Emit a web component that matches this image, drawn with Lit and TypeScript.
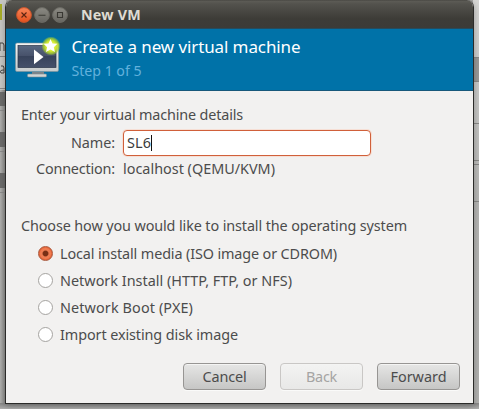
import { LitElement, html, css, svg } from "lit";
import { customElement, property, query } from "lit/decorators.js";

/** A single line of text, tracked so that it fills the given width. */
@customElement("tracked-text")
class TrackedText extends LitElement {
  @property() text = "";
  @property({ type: Number }) width = 0;
  @query("span") span!: HTMLSpanElement;
  static styles = css`
    :host { display: block; white-space: pre; flex: none; }
    span { display: inline-block; }
  `;
  updated() {
    this.span.style.letterSpacing = "0px";
    const natural = this.span.getBoundingClientRect().width;
    this.span.style.letterSpacing = (this.width - natural) / this.text.length + "px";
    this.style.width = this.width + "px";
  }
  render() {
    return html`<span>${this.text}</span>`;
  }
}

const line = (text: string, width: number, cls = "") =>
  html`<tracked-text class=${cls} .text=${text} .width=${width}></tracked-text>`;

@customElement("window-controls")
class WindowControls extends LitElement {
  static styles = css`:host { display: block; height: 18px; } svg { display: block; }`;
  render() {
    const disc = (x: number, fill: string, rim: string, glyph: unknown) => svg`
      <circle cx=${x} cy="9" r="7.4" fill=${fill} stroke=${rim} stroke-width="1"/>${glyph}`;
    return html`<svg width="56" height="18" viewBox="0 0 56 18" fill="none" stroke="#393833" stroke-width="1.1">
      <defs>
        <linearGradient id="o" x2="0" y2="1"><stop stop-color="#f8865a"/><stop offset="1" stop-color="#e4501c"/></linearGradient>
        <linearGradient id="g" x2="0" y2="1"><stop stop-color="#8b8a83"/><stop offset="1" stop-color="#676660"/></linearGradient>
      </defs>
      ${disc(9, "url(#o)", "#c5532b", svg`<path d="M6.5 6.5l5 5M11.5 6.5l-5 5" stroke="#5b2412"/>`)}
      ${disc(27, "url(#g)", "#6b6a64", svg`<path d="M23.5 9.2h7"/>`)}
      ${disc(45, "url(#g)", "#6b6a64", svg`<path d="M42.5 6.5h5v5h-5z"/>`)}
    </svg>`;
  }
}

@customElement("app-root")
class AppRoot extends LitElement {
  static styles = css`
    :host {
      display: block; position: relative; width: 479px; height: 409px; overflow: hidden;
      background: #a2a2a0; color: #4c4c4c;
      font: 14.4px/20px "Noto Sans", "Open Sans", sans-serif;
    }
    * { box-sizing: border-box; }
    .behind { position: absolute; inset: 0; width: 479px; height: 409px; }
    .window {
      position: relative; width: 469px; height: 404px; margin-left: 5px;
      border: 1px solid #2b2b29; border-top: 0; border-radius: 7px 7px 0 0;
      background: #f2f1f0; overflow: hidden; box-shadow: 0 2px 6px #0004;
      display: flex; flex-direction: column;
    }
    .title {
      height: 29px; flex: none; display: flex; align-items: center; padding-left: 9px;
      background: linear-gradient(#42413d 0, #5d5c56 1px, #53524d 4px, #3d3c37 19px, #3c3b37 28px, #264b5c 28px);
      color: #dfdbd2; font-weight: 700; font-size: 14.3px;
    }
    .title tracked-text { margin-left: 10px; }
    .banner {
      height: 62px; flex: none; background: #0072a8; border-bottom: 1px solid #17587b;
      display: flex; padding: 7px 0 0 8px; gap: 9.5px;
    }
    .banner svg { display: block; flex: none; }
    .head { color: #fff; font-size: 17px; line-height: 22px; }
    .step { color: #62b1dc; font-size: 14.2px; line-height: 20px; margin-top: 3px; }
    .body { padding: 14px 0 0 15px; height: 262px; }
    .form { display: grid; grid-template-columns: 94px 250px; column-gap: 8px; align-items: center; padding-top: 5px; }
    .form .label { justify-self: end; }
    .entry {
      height: 26px; border: 1px solid #d0603a; border-radius: 4px; background: #fff;
      display: flex; align-items: center; padding-left: 3px; width: 248px;
      color: #3c3c3c; box-shadow: 0 0 0 1px #f6dfd5;
    }
    .caret { width: 1px; height: 16px; background: #111; }
    .row2 { margin-top: 3px; }
    .choose { margin-top: 37px; }
    .options { padding: 4px 0 0 17px; }
    .option { height: 27px; display: flex; align-items: center; gap: 7px; }
    .radio {
      width: 15px; height: 15px; border-radius: 50%; border: 1px solid #a5a3a0;
      background: #fff;
    }
    .radio.on {
      border-color: #a8573b;
      background: radial-gradient(circle, #7a3015 0 2.3px, #ef7d52 3.5px 5px, #e9683b 6px);
    }
    .actions { display: flex; justify-content: flex-end; gap: 14px; padding: 10px 13px 0 0; }
    .button {
      width: 83px; height: 27px; border: 1px solid #979593; border-radius: 4px;
      background: linear-gradient(#e6e6e5, #c6c6c5); box-shadow: inset 0 1px #f4f4f3, 0 1px #fafaf9;
      display: flex; align-items: center; justify-content: center;
    }
    .button.off { color: #a5a4a3; border-color: #c9c7c5; background: linear-gradient(#f3f3f2, #e8e8e7); }
  `;

  private behind() {
    return html`<svg class="behind" viewBox="0 0 479 409">
      <defs>
        <linearGradient id="edge"><stop stop-color="#b0b0ae"/><stop offset="1" stop-color="#858583"/></linearGradient>
        <linearGradient id="rt" x2="0" y2="1"><stop stop-color="#d6d6d4"/><stop offset=".5" stop-color="#b4b4b2"/><stop offset="1" stop-color="#b0b0ae"/></linearGradient>
        <linearGradient id="bot" x2="0" y2="1"><stop stop-color="#858584"/><stop offset="1" stop-color="#b0b0af"/></linearGradient>
      </defs>
      <rect width="6" height="409" fill="url(#edge)"/>
      <rect width="6" height="90" fill="#c6c6c3"/>
      <rect y="4" width="2" height="16" fill="#a8ae28"/>
      <rect y="56" width="6" height="1" fill="#888"/><rect y="88" width="6" height="1" fill="#888"/>
      <path d="M0 43v8M0 43q4-1 4 2v6M1 66q3-1 3 2v5h-3q-2-3 3-3" fill="none" stroke="#444"/>
      <path d="M0 92h6v14h-6zM0 132h6v15h-6zM0 173h6v15h-6z" fill="#6c6c6b"/>
      <path d="M0 110.5h6M0 151.5h6M0 192.5h6" stroke="#8c8c8b"/>
      <rect x="473" width="6" height="409" fill="url(#rt)"/>
      <rect x="473" y="58" width="6" height="24" fill="#989896"/>
      <path d="M473 57.5h6M473 81.5h6M473 123.5h6M473 160.5h6M473 164.5h6M473 201.5h6" stroke="#888886"/>
      <rect y="403" width="479" height="6" fill="url(#bot)"/>
    </svg>`;
  }

  private monitor() {
    return html`<svg width="48" height="46" viewBox="0 0 48 46">
      <defs>
        <linearGradient id="frame" x2="0" y2="1"><stop stop-color="#f4f4f3"/><stop offset="1" stop-color="#c7cbcc"/></linearGradient>
        <linearGradient id="screen" x2="0" y2="1"><stop stop-color="#596881"/><stop offset=".48" stop-color="#47516a"/><stop offset=".5" stop-color="#38435b"/><stop offset="1" stop-color="#45506a"/></linearGradient>
        <radialGradient id="glow"><stop stop-color="#f8ff8a"/><stop offset=".55" stop-color="#d1e92c"/><stop offset=".8" stop-color="#a9d02d" stop-opacity=".75"/><stop offset="1" stop-color="#a9d02d" stop-opacity="0"/></radialGradient>
      </defs>
      <path d="M18 36h12v3H18z" fill="#7b8389"/>
      <rect x="13.5" y="38" width="19" height="3" rx="1" fill="#d1d5d4" stroke="#7e8b90" stroke-width=".6"/>
      <rect x="1.5" y="7" width="43" height="28.5" rx="1.5" fill="url(#frame)" stroke="#7e9099" stroke-width=".6"/>
      <rect x="4" y="9.5" width="38" height="22" fill="url(#screen)" stroke="#293448" stroke-width=".7"/>
      <path d="M20 13.5L29.5 21 20 28.2z" fill="#fff"/>
      <circle cx="37" cy="10" r="9.6" fill="url(#glow)"/>
      <path d="M36.5 3l2 4.4 4.9.4-3.6 3.4 1.1 4.8-4.4-2.4-4.5 2.4 1.1-4.8-3.5-3.4 4.9-.4z" fill="#fff"/>
    </svg>`;
  }

  render() {
    const options: [string, number][] = [
      ["Local install media (ISO image or CDROM)", 277],
      ["Network Install (HTTP, FTP, or NFS)", 232],
      ["Network Boot (PXE)", 133],
      ["Import existing disk image", 178],
    ];
    return html`
      ${this.behind()}
      <div class="window">
        <div class="title"><window-controls></window-controls>${line("New VM", 60)}</div>
        <div class="banner">
          ${this.monitor()}
          <div>${line("Create a new virtual machine", 229, "head")}${line("Step 1 of 5", 70, "step")}</div>
        </div>
        <div class="body">
          ${line("Enter your virtual machine details", 222)}
          <div class="form">
            ${line("Name:", 44, "label")}
            <div class="entry">${line("SL6", 24)}<div class="caret"></div></div>
            ${line("Connection:", 79, "label row2")}
            ${line("localhost (QEMU/KVM)", 152, "row2")}
          </div>
          ${line("Choose how you would like to install the operating system", 386, "choose")}
          <div class="options">
            ${options.map(([label, width], i) => html`
              <div class="option"><div class="radio ${i === 0 ? "on" : ""}"></div>${line(label, width)}</div>`)}
          </div>
        </div>
        <div class="actions">
          <div class="button">${line("Cancel", 44)}</div>
          <div class="button off">${line("Back", 31)}</div>
          <div class="button">${line("Forward", 56)}</div>
        </div>
      </div>`;
  }
}
